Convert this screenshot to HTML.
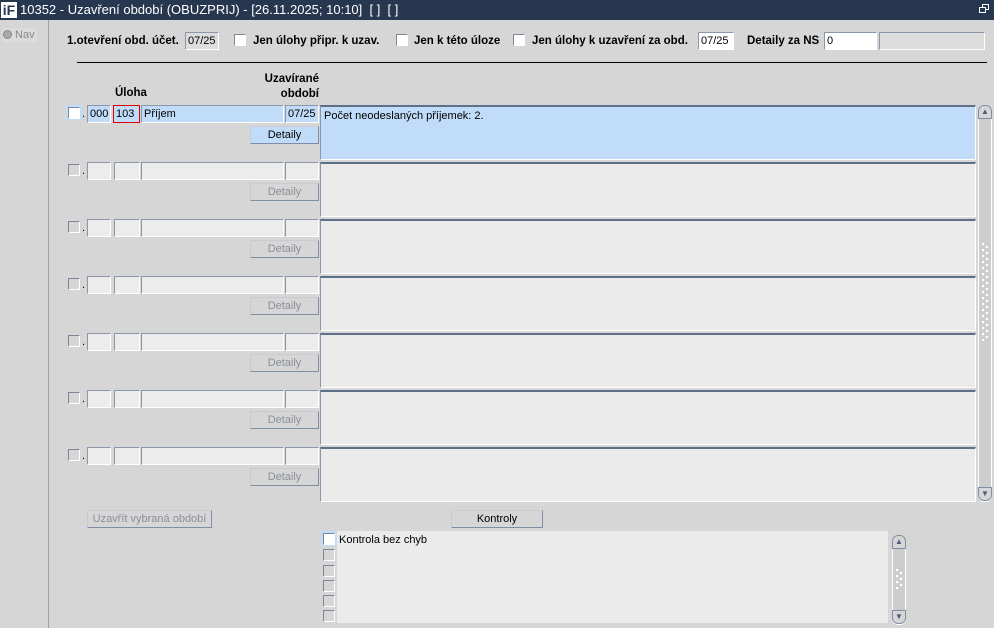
<!DOCTYPE html>
<html><head><meta charset="utf-8"><style>
*{box-sizing:border-box;margin:0;padding:0}
body{width:994px;height:628px;overflow:hidden;background:#d6d6d6;font-family:"Liberation Sans",Arial,sans-serif;font-size:11px;color:#000;position:relative}
.a{position:absolute}
.title{left:0;top:0;width:994px;height:20px;background:#283750;color:#fff;font-size:13px;line-height:20px}
.f{position:absolute;height:18px;border:1px solid #8a97aa;border-right-color:#fff;border-bottom-color:#fff;background:#ececec;padding-left:2px;line-height:16px;font-size:11px}
.cb{position:absolute;width:12px;height:12px;border:1px solid #7d8797;border-right-color:#fff;border-bottom-color:#fff;background:#d6d6d6}
.btn{position:absolute;height:18px;border:1px solid #c8ccd2;border-right-color:#7f8ea6;border-bottom-color:#7f8ea6;background:#d6d6d6;color:#8a8f99;text-align:center;line-height:16px;font-size:11px}
.ta{position:absolute;left:320px;width:656px;height:55px;border:1px solid #8a97aa;border-top:2px solid #5e6f8b;border-right-color:#fff;border-bottom-color:#fff;background:#ebebeb}
.lb{position:absolute;font-weight:bold;font-size:11.5px}
.grip{position:absolute;width:7px;background-image:radial-gradient(circle at 1px 1px,#fff 1px,transparent 1.5px),radial-gradient(circle at 5px 4px,#fff 1px,transparent 1.5px);background-size:7px 6px}
</style></head><body>
<div class="a title"><span class="a" style="left:1px;top:2px;width:16px;height:16px;background:#fff;color:#283750;font-weight:bold;font-size:14px;line-height:16px;text-align:center">iF</span><span class="a" style="left:20px;top:0">10352 - Uzavření období (OBUZPRIJ) - [26.11.2025; 10:10] &nbsp;[ ] &nbsp;[ ]</span><span class="a" style="left:982px;top:4px;width:7px;height:6px;border:1px solid #fff"></span><span class="a" style="left:979px;top:7px;width:7px;height:6px;border:1px solid #fff;background:#283750"></span></div>
<div class="a" style="left:0;top:20px;width:49px;height:608px;border-right:1px solid #9aa3ae;background:#d6d6d6"></div>
<div class="a" style="left:3px;top:28px;width:34px;height:14px;background:#dcdcdc;color:#888;font-size:11px;line-height:14px"><span style="display:inline-block;width:9px;height:9px;border-radius:50%;background:#aaa;border:1px solid #888;vertical-align:-1px"></span> Nav</div>
<div class="lb" style="left:67px;top:35px">1.otevření obd. účet.</div>
<div class="f" style="left:185px;top:32px;width:34px;background:#ddd">07/25</div>
<div class="cb" style="left:234px;top:34px;background:#fff"></div><div class="lb" style="left:253px;top:35px">Jen úlohy připr. k uzav.</div>
<div class="cb" style="left:396px;top:34px;background:#fff"></div><div class="lb" style="left:414px;top:35px">Jen k této úloze</div>
<div class="cb" style="left:513px;top:34px;background:#fff"></div><div class="lb" style="left:532px;top:35px">Jen úlohy k uzavření za obd.</div>
<div class="f" style="left:698px;top:32px;width:36px;background:#fff">07/25</div>
<div class="lb" style="left:747px;top:35px">Detaily za NS</div>
<div class="f" style="left:824px;top:32px;width:53px;background:#fff">0</div>
<div class="f" style="left:879px;top:32px;width:106px;background:#ddd"></div>
<div class="a" style="left:77px;top:62px;width:910px;height:1px;background:#000"></div>
<div class="lb" style="left:115px;top:87px">Úloha</div>
<div class="lb" style="left:240px;top:72px;width:79px;text-align:right;line-height:15px">Uzavírané<br>období</div>

<div class="a" style="left:66px;top:105px;width:16px;height:15px;background:#c0dcf8"></div>
<div class="cb" style="left:68px;top:107px;background:#fff"></div><div class="a" style="left:82px;top:108px">.</div>
<div class="f" style="left:87px;top:105px;width:24px;background:#c0dcf8">000</div>
<div class="f" style="left:113px;top:105px;width:27px;background:#c0dcf8;border:1px solid #e00000">103</div>
<div class="f" style="left:141px;top:105px;width:143px;background:#c0dcf8">Příjem</div>
<div class="f" style="left:285px;top:105px;width:34px;background:#c0dcf8">07/25</div>
<div class="btn" style="left:250px;top:126px;width:69px;background:#c0dcf8;color:#000">Detaily</div>
<div class="ta" style="top:105px;background:#c0dcf8;padding:3px 3px">Počet neodeslaných příjemek: 2.</div>

<div id="rows"></div>
<script>
let h='';
for(let i=1;i<7;i++){const y=105+57*i;
h+=`<div class="cb" style="left:68px;top:${y+2}px"></div><div class="a" style="left:82px;top:${y+3}px">.</div>
<div class="f" style="left:87px;top:${y}px;width:24px"></div>
<div class="f" style="left:114px;top:${y}px;width:26px"></div>
<div class="f" style="left:141px;top:${y}px;width:143px"></div>
<div class="f" style="left:285px;top:${y}px;width:34px"></div>
<div class="btn" style="left:250px;top:${y+21}px;width:69px">Detaily</div>
<div class="ta" style="top:${y}px"></div>`;}
document.getElementById('rows').outerHTML=h;
</script>

<div class="a" style="left:978px;top:105px;width:14px;height:397px;background:#cdcdcd;border:1px solid #fff;border-radius:6px"></div>
<div class="a" style="left:978px;top:105px;width:14px;height:14px;border:1px solid #7f8ea6;border-radius:6px 6px 0 0;background:#d6d6d6;font-size:8px;color:#4a5a78;text-align:center;line-height:12px">▲</div>
<div class="a" style="left:978px;top:487px;width:14px;height:14px;border:1px solid #7f8ea6;border-radius:0 0 6px 6px;background:#d6d6d6;font-size:8px;color:#4a5a78;text-align:center;line-height:12px">▼</div>
<div class="grip" style="left:982px;top:243px;height:98px"></div>

<div class="btn" style="left:87px;top:510px;width:125px">Uzavřít vybraná období</div>
<div class="btn" style="left:451px;top:510px;width:92px;color:#000">Kontroly</div>
<div class="a" style="left:337px;top:531px;width:551px;height:92px;background:#ebebeb"></div>
<div class="a" style="left:321px;top:531px;width:16px;height:15px;background:#c0dcf8"></div>
<div class="cb" style="left:323px;top:533px;background:#fff"></div>
<div class="a" style="left:339px;top:534px">Kontrola bez chyb</div>
<div class="cb" style="left:323px;top:549px"></div>
<div class="cb" style="left:323px;top:565px"></div>
<div class="cb" style="left:323px;top:580px"></div>
<div class="cb" style="left:323px;top:595px"></div>
<div class="cb" style="left:323px;top:610px"></div>
<div class="a" style="left:892px;top:535px;width:14px;height:90px;background:#cdcdcd;border:1px solid #fff;border-radius:6px"></div>
<div class="a" style="left:892px;top:535px;width:14px;height:14px;border:1px solid #7f8ea6;border-radius:6px 6px 0 0;background:#d6d6d6;font-size:8px;color:#4a5a78;text-align:center;line-height:12px">▲</div>
<div class="a" style="left:892px;top:610px;width:14px;height:14px;border:1px solid #7f8ea6;border-radius:0 0 6px 6px;background:#d6d6d6;font-size:8px;color:#4a5a78;text-align:center;line-height:12px">▼</div>
<div class="grip" style="left:896px;top:569px;height:20px"></div>
</body></html>
